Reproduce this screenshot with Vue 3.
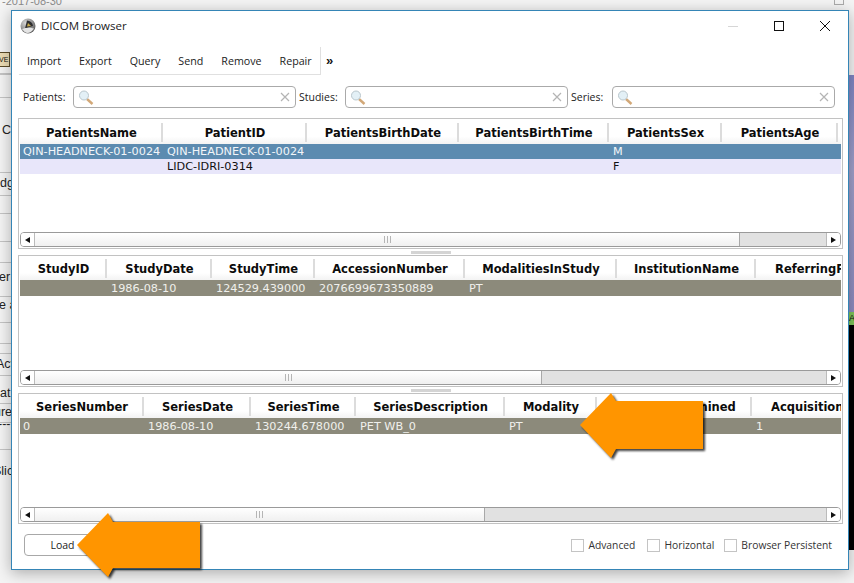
<script setup>
const toolbarItems = ['Import', 'Export', 'Query', 'Send', 'Remove', 'Repair']

const searches = [
  { label: 'Patients:', labelWidth: 50 },
  { label: 'Studies:', labelWidth: 46 },
  { label: 'Series:', labelWidth: 41 },
]

const panels = [
  {
    name: 'patients',
    gap: 0,
    height: 131,
    columns: [
      ['PatientsName', 143], ['PatientID', 144], ['PatientsBirthDate', 152],
      ['PatientsBirthTime', 150], ['PatientsSex', 113], ['PatientsAge', 116],
    ],
    rows: [
      { kind: 'selected', cells: ['QIN-HEADNECK-01-0024', 'QIN-HEADNECK-01-0024', '', '', 'M', ''] },
      { kind: 'alt', cells: ['', 'LIDC-IDRI-0314', '', '', 'F', ''] },
    ],
    thumb: 705,
  },
  {
    name: 'studies',
    gap: 6,
    height: 132,
    columns: [
      ['StudyID', 87], ['StudyDate', 105], ['StudyTime', 103], ['AccessionNumber', 150],
      ['ModalitiesInStudy', 152], ['InstitutionName', 139], ['ReferringPhysicianName', 198],
    ],
    rows: [
      { kind: 'muted', cells: ['', '1986-08-10', '124529.439000', '2076699673350889', 'PT', '', ''] },
    ],
    thumb: 507,
  },
  {
    name: 'series',
    gap: 6,
    height: 131,
    columns: [
      ['SeriesNumber', 124], ['SeriesDate', 107], ['SeriesTime', 105], ['SeriesDescription', 149],
      ['Modality', 92], ['BodyPartExamined', 155], ['AcquisitionNumber', 162],
    ],
    rows: [
      { kind: 'muted', cells: ['0', '1986-08-10', '130244.678000', 'PET WB_0', 'PT', '', '1'] },
    ],
    thumb: 450,
  },
]

const options = ['Advanced', 'Horizontal', 'Browser Persistent']

// bits of the application behind the dialog, seen in the strip on its left
const behindLines = [73, 74, 97, 172, 195, 213, 241, 262, 296, 322, 343, 353, 375, 403, 422, 449]
const behindTexts = [
  { text: 'C', top: 124, left: 2 },
  { text: 'dg', top: 177, left: 0 },
  { text: 'her', top: 271, left: -8 },
  { text: 'e a', top: 299, left: -1 },
  { text: 'Act', top: 358, left: -4 },
  { text: 'at', top: 387, left: 0 },
  { text: 'ure', top: 406, left: -6 },
  { text: '---', top: 418, left: -2 },
  { text: 'Slic', top: 465, left: -7 },
]
</script>

<template>
  <div class="desktop">
    <div class="behind-date">-2017-08-30</div>
    <div class="behind-left">
      <div v-for="y in behindLines" :key="y" class="behind-line" :style="{ top: y + 'px' }"></div>
      <span
        v-for="t in behindTexts"
        :key="t.text"
        class="behind-text"
        :style="{ top: t.top + 'px', left: t.left + 'px' }"
      >{{ t.text }}</span>
      <div class="behind-icon">VE</div>
    </div>
    <div class="behind-right">
      <div class="behind-square"></div>
      <div class="behind-purple"></div>
      <div class="behind-green">A</div>
      <div class="behind-black"></div>
    </div>

    <div class="window">
      <div class="titlebar">
        <svg class="app-icon" width="16" height="16" viewBox="0 0 16 16">
          <defs>
            <radialGradient id="ball" cx="0.35" cy="0.3" r="0.8">
              <stop offset="0" stop-color="#d8d8d8" />
              <stop offset="0.6" stop-color="#8c8c8c" />
              <stop offset="1" stop-color="#4c4c4c" />
            </radialGradient>
          </defs>
          <circle cx="8" cy="8" r="7.5" fill="url(#ball)" />
          <path d="M5 10.5 L7 2.5 A6 6 0 0 1 13 8 Z" fill="#2e2e30" />
          <path d="M7 8.5 L8 5 L11 8 Z" fill="#c9ab4a" />
          <path d="M2 11 Q8 9 14 10.5 Q11 15 7 15 Q4 14 2 11 Z" fill="#e4e4e4" />
        </svg>
        <span class="title">DICOM Browser</span>
        <div class="window-controls">
          <svg width="12" height="12" viewBox="0 0 12 12"><path d="M1 6.5 H11" stroke="#d6d6d6" fill="none" /></svg>
          <svg width="12" height="12" viewBox="0 0 12 12"><rect x="1.5" y="1.5" width="9" height="9" stroke="#111" fill="none" /></svg>
          <svg width="12" height="12" viewBox="0 0 12 12"><path d="M1 1 L11 11 M11 1 L1 11" stroke="#111" fill="none" /></svg>
        </div>
      </div>

      <div class="toolbar-row">
        <div class="toolbar">
          <span v-for="item in toolbarItems" :key="item" class="tool">{{ item }}</span>
        </div>
        <span class="more">»</span>
      </div>

      <div class="search-row">
        <template v-for="s in searches" :key="s.label">
          <label class="search-label" :style="{ width: s.labelWidth + 'px' }">{{ s.label }}</label>
          <div class="search-field">
            <svg width="17" height="15" viewBox="0 0 17 15">
              <path d="M9 9 L14.5 14" stroke="#d2a878" stroke-width="2.4" fill="none" />
              <circle cx="6" cy="5.5" r="4.5" fill="#e3f0f6" stroke="#b9c6cc" />
            </svg>
            <svg class="clear" width="10" height="10" viewBox="0 0 10 10">
              <path d="M1 1 L9 9 M9 1 L1 9" stroke="#b4b4b4" stroke-width="1.2" fill="none" />
            </svg>
          </div>
        </template>
      </div>

      <div class="panels">
        <template v-for="panel in panels" :key="panel.name">
          <div v-if="panel.gap" class="splitter"><span class="grip"></span></div>
          <section class="panel" :class="{ tight: panel.gap }" :style="{ height: panel.height + 'px' }">
            <div class="table">
              <div class="thead">
                <div
                  v-for="col in panel.columns"
                  :key="col[0]"
                  class="th"
                  :style="{ width: col[1] + 'px' }"
                >{{ col[0] }}</div>
              </div>
              <div
                v-for="(row, r) in panel.rows"
                :key="r"
                class="tr"
                :class="row.kind"
              >
                <div
                  v-for="(cell, c) in row.cells"
                  :key="c"
                  class="td"
                  :style="{ width: panel.columns[c][1] + 'px' }"
                >{{ cell }}</div>
              </div>
            </div>
            <div class="scrollbar">
              <span class="scroll-btn"><i class="arrow-left"></i></span>
              <span class="thumb" :style="{ width: panel.thumb + 'px' }"><i class="thumb-grip"></i></span>
              <span class="track"></span>
              <span class="scroll-btn end"><i class="arrow-right"></i></span>
            </div>
          </section>
        </template>
      </div>

      <div class="footer">
        <button class="load">Load</button>
        <div class="options">
          <label v-for="o in options" :key="o" class="option">
            <span class="box"></span>{{ o }}
          </label>
        </div>
      </div>
    </div>

    <svg class="callouts" width="854" height="583" viewBox="0 0 854 583">
      <polygon points="580,425 611,393 616,401 703,401 703,449 616,449 611,458" />
      <polygon points="77,545 108,513 113,522 200,522 200,568 113,568 108,577" />
    </svg>
  </div>
</template>

<style>
html, body {
  margin: 0;
  background: #f2f2f2;
}
</style>

<style scoped>
.desktop {
  position: relative;
  width: 854px;
  height: 583px;
  overflow: hidden;
  background: #f4f4f4;
  font-family: "DejaVu Sans", sans-serif;
  color: #111;
}

.behind-date {
  position: absolute;
  top: -5px;
  left: 2px;
  font: 11px "Liberation Sans", sans-serif;
  color: #8d8d8d;
}

.behind-left {
  position: absolute;
  top: 0;
  left: 0;
  width: 11px;
  height: 570px;
  overflow: hidden;
}

.behind-line {
  position: absolute;
  left: 0;
  width: 11px;
  height: 1px;
  background: #c4c4c4;
}

.behind-text {
  position: absolute;
  font: 12.5px/12px "Liberation Sans", sans-serif;
  white-space: nowrap;
  color: #222;
}

.behind-icon {
  position: absolute;
  top: 52px;
  left: -2px;
  width: 10px;
  height: 13px;
  border: 1px solid #5b4c2a;
  background: #ecdcb4;
  font: 7px "Liberation Sans", sans-serif;
  line-height: 13px;
}

.behind-right {
  position: absolute;
  top: 0;
  left: 849px;
  width: 5px;
  height: 550px;
  display: flex;
  flex-direction: column;
}

.behind-square {
  position: absolute;
  top: -4px;
  left: -15px;
  width: 8px;
  height: 7px;
  border: 1px solid #aaa;
}

.behind-purple {
  margin-top: 75px;
  height: 237px;
  background: linear-gradient(#7f86c4, #a1a1cb 40%, #8d8cc0);
}

.behind-green {
  height: 13px;
  background: #7fc65a;
  font: 9px "Liberation Sans", sans-serif;
  line-height: 13px;
}

.behind-black {
  flex: 1;
  background: #000;
}

.window {
  position: absolute;
  top: 10px;
  left: 11px;
  box-sizing: border-box;
  width: 838px;
  height: 560px;
  display: flex;
  flex-direction: column;
  border: 1px solid #3585b6;
  background: #fff;
  box-shadow: 0 3px 14px rgba(0, 0, 0, 0.3);
}

.titlebar {
  display: flex;
  align-items: center;
  height: 29px;
  padding: 0 17px 0 8px;
  flex-shrink: 0;
}

.app-icon {
  margin-right: 5px;
}

.title {
  font: 11.5px "Open Sans", sans-serif;
  color: #222;
}

.window-controls {
  margin-left: auto;
  display: flex;
  gap: 34px;
}

.toolbar-row {
  display: flex;
  align-items: center;
  margin: 7px 0 0 7px;
  flex-shrink: 0;
}

.toolbar {
  display: flex;
  align-items: center;
  box-sizing: border-box;
  width: 302px;
  height: 28px;
  padding-left: 8px;
  gap: 18px;
  border-right: 1px solid #e0e0e0;
  border-bottom: 1px solid #e0e0e0;
}

.tool {
  font: 10.7px "Open Sans", sans-serif;
  color: #222;
}

.more {
  margin: -2px 0 0 5px;
  font: bold 13px "Liberation Sans", sans-serif;
}

.search-row {
  display: flex;
  align-items: center;
  margin: 11px 0 0 11px;
  height: 22px;
  flex-shrink: 0;
}

.search-label {
  flex-shrink: 0;
  font: 10.5px "Open Sans", sans-serif;
  color: #222;
}

.search-field {
  box-sizing: border-box;
  display: flex;
  align-items: center;
  justify-content: space-between;
  width: 223px;
  height: 22px;
  padding: 0 5px 0 4px;
  margin-right: 3px;
  border: 1px solid #aaa;
  border-radius: 4px;
}

.panels {
  margin: 10px 0 0 6px;
  width: 825px;
  flex-shrink: 0;
}

.splitter {
  display: flex;
  justify-content: center;
  align-items: center;
  height: 6px;
}

.grip {
  display: block;
  width: 40px;
  height: 3px;
  background: #d4d4d4;
}

.panel {
  box-sizing: border-box;
  display: flex;
  flex-direction: column;
  padding: 0 1px 1px;
  border: 1px solid #c2c2c2;
  overflow: hidden;
}

.table {
  flex: 1;
  overflow: hidden;
}

.thead {
  display: flex;
  height: 25px;
  background: linear-gradient(#fff 70%, #f3f3f3);
}

.th {
  box-sizing: border-box;
  flex-shrink: 0;
  height: 19px;
  margin-top: 4px;
  padding-left: 2px;
  border-right: 2px solid #dcdcdc;
  text-align: center;
  white-space: nowrap;
  font-size: 11.5px;
  font-weight: bold;
  line-height: 20px;
  color: #0c0c0c;
}

.panel.tight .thead {
  height: 24px;
}

.panel.tight .th {
  margin-top: 3px;
}

.tr {
  display: flex;
  height: 15px;
}

.tr.selected {
  background: #5c8bb0;
  color: #f2f6f9;
}

.tr.alt {
  background: #e8e6fa;
  color: #111;
}

.tr.muted {
  height: 16px;
  background: #8c8a7b;
  color: #f0f0ec;
}

.td {
  box-sizing: border-box;
  flex-shrink: 0;
  padding: 1px 0 0 4px;
  white-space: nowrap;
  overflow: hidden;
  font: 11.25px/14px "DejaVu Sans", sans-serif;
}

.td:first-child {
  padding-left: 3px;
}

.tr.muted .td {
  padding-top: 2px;
}

.scrollbar {
  display: flex;
  box-sizing: border-box;
  height: 15px;
  flex-shrink: 0;
  border: 1px solid #9a9a9a;
  border-radius: 4px;
  overflow: hidden;
}

.scroll-btn {
  flex-shrink: 0;
  box-sizing: border-box;
  width: 14px;
  display: flex;
  align-items: center;
  justify-content: center;
  border-right: 1px solid #bbb;
  background: #fff;
}

.scroll-btn.end {
  border-right: 0;
  border-left: 1px solid #bbb;
}

.arrow-left {
  border-top: 3.5px solid transparent;
  border-bottom: 3.5px solid transparent;
  border-right: 5px solid #111;
}

.arrow-right {
  border-top: 3.5px solid transparent;
  border-bottom: 3.5px solid transparent;
  border-left: 5px solid #111;
}

.thumb {
  flex-shrink: 0;
  box-sizing: border-box;
  display: flex;
  align-items: center;
  justify-content: center;
  border-right: 1px solid #a8a8a8;
  background: linear-gradient(#fff, #f0f0f0);
}

.thumb-grip {
  width: 7px;
  height: 7px;
  background: repeating-linear-gradient(90deg, #b5b5b5 0 1px, transparent 1px 3px);
}

.track {
  flex: 1;
  background: #e1e1e1;
}

.footer {
  display: flex;
  align-items: center;
  justify-content: space-between;
  margin: 10px 16px 0 12px;
  flex-shrink: 0;
}

.load {
  box-sizing: border-box;
  width: 90px;
  height: 22px;
  padding: 0 13px 0 0;
  border: 1px solid #a8a8a8;
  border-radius: 4px;
  background: #fff;
  font: 10.5px "Open Sans", sans-serif;
  color: #222;
}

.options {
  display: flex;
  gap: 10px;
}

.option {
  display: flex;
  align-items: center;
  gap: 4px;
  font: 10.3px "Open Sans", sans-serif;
  color: #333;
}

.option:first-child {
  margin-right: 2px;
}

.box {
  box-sizing: border-box;
  width: 13px;
  height: 13px;
  border: 1px solid #c4c4c4;
}

.callouts {
  position: absolute;
  top: 0;
  left: 0;
  pointer-events: none;
}

.callouts polygon {
  fill: #ff9500;
  filter: drop-shadow(2px 2px 1px rgba(0, 0, 0, 0.75));
}
</style>
